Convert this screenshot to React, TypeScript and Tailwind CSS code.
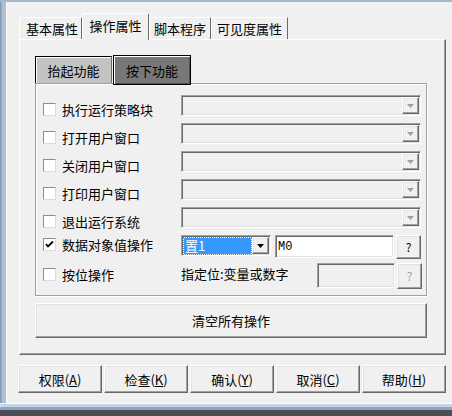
import React from "react";

const font = { fontFamily: '"Noto Sans CJK SC", "Noto Sans", sans-serif' };

const raised =
  "border border-t-white border-l-white border-b-[#696969] border-r-[#696969] shadow-[inset_-1px_-1px_0_#a0a0a0,inset_1px_1px_0_#e3e3e3] bg-[#f0f0f0]";
const sunken =
  "border border-t-[#a0a0a0] border-l-[#a0a0a0] border-b-white border-r-white shadow-[inset_1px_1px_0_#696969,inset_-1px_-1px_0_#e3e3e3]";

function Arrow({ color }: { color: string }) {
  return (
    <svg width="7" height="4" viewBox="0 0 7 4">
      <polygon points="0,0 7,0 3.5,4" fill={color} />
    </svg>
  );
}

function Check({ checked }: { checked?: boolean }) {
  return (
    <div className="w-[13px] h-[13px] shrink-0 bg-white border border-t-[#8e8f8f] border-l-[#8e8f8f] border-b-[#dcdcdc] border-r-[#dcdcdc] flex items-center justify-center">
      {checked && (
        <svg width="9" height="9" viewBox="0 0 9 9">
          <polyline points="1,4 3,6.5 8,1.5" fill="none" stroke="#000" strokeWidth="1.8" />
        </svg>
      )}
    </div>
  );
}

function DisabledCombo() {
  return (
    <div className={`w-[240px] h-[21px] ${sunken} bg-[#f0f0f0] flex justify-end items-center pr-[1px]`}>
      <div className={`w-[17px] h-[17px] ${raised} flex items-center justify-center`}>
        <Arrow color="#a0a0a0" />
      </div>
    </div>
  );
}

function Row({ label, top, children, checked }: { label: string; top: string; children: React.ReactNode; checked?: boolean }) {
  return (
    <div className="flex items-start h-[28px]">
      <div className={`w-[138px] flex items-center gap-[6px] h-[13px] ${top}`}>
        <Check checked={checked} />
        <span className="text-[13px] leading-[13px] text-black whitespace-nowrap">{label}</span>
      </div>
      {children}
    </div>
  );
}

function BottomBtn({ a, k }: { a: string; k: string }) {
  return (
    <div className={`w-[84px] h-[28px] ${raised} flex items-center justify-center text-[13px] leading-[13px] text-black`}>
      <span>
        {a}(<span className="underline">{k}</span>)
      </span>
    </div>
  );
}

export default function App() {
  return (
    <div className="w-[452px] h-[416px] bg-[#f0f0f0] flex flex-col overflow-hidden" style={font}>
      <div className="h-[2px] shrink-0 bg-[#a3b7cd]" />
      <div className="flex flex-1 min-h-0">
        <div className="w-[7px] shrink-0 bg-gradient-to-r from-[#7f93aa] via-[#b3c5d9] to-[#a9bcd2] border-r border-white" />
        <div className="flex-1 flex flex-col pl-[12px] pr-[6px] pt-[11px]">
          {/* tabs */}
          <div className="flex items-end h-[26px] text-[13px] leading-[13px] text-black">
            <div className="w-[63px] h-[22px] border-t border-l border-white border-r border-r-[#696969] rounded-tl-[2px] flex items-center justify-center pl-[3px]">
              基本属性
            </div>
            <div className="w-[67px] h-[27px] -mb-[1px] relative z-10 bg-[#f0f0f0] border-t border-l border-white border-r border-r-[#696969] rounded-t-[2px] flex justify-center pt-[5px]">
              操作属性
            </div>
            <div className="w-[62px] h-[22px] border-t border-l border-white border-r border-r-[#696969] flex items-center justify-center">
              脚本程序
            </div>
            <div className="w-[77px] h-[22px] border-t border-l border-white border-r border-r-[#696969] flex items-center justify-center">
              可见度属性
            </div>
          </div>
          {/* tab panel */}
          <div className="h-[316px] border border-t-white border-l-white border-r-[#696969] border-b-[#696969] shadow-[inset_-1px_-1px_0_#a0a0a0] pt-[15px] pl-[15px] flex flex-col">
            {/* sub tabs */}
            <div className="flex items-end h-[28px] text-[13px] leading-[13px] text-black">
              <div className="w-[77px] h-[27px] bg-[#c3c3c3] border-t border-l border-black border-r border-r-[#6a6a6a] shadow-[inset_1px_1px_0_#fff] flex items-center justify-center">
                抬起功能
              </div>
              <div className="ml-[1px] w-[78px] h-[30px] -mb-[2px] relative z-10 bg-[#787878] border border-black shadow-[inset_1px_1px_0_#fff,inset_-1px_-1px_0_#505050] flex items-center justify-center">
                按下功能
              </div>
            </div>
            {/* sub panel */}
            <div className="w-[392px] h-[213px] border border-[#a0a0a0] shadow-[1px_1px_0_#fff,inset_1px_1px_0_#fff] pt-[11px] pl-[7px] flex flex-col">
              <Row label="执行运行策略块" top="mt-[8px]"><DisabledCombo /></Row>
              <Row label="打开用户窗口" top="mt-[8px]"><DisabledCombo /></Row>
              <Row label="关闭用户窗口" top="mt-[8px]"><DisabledCombo /></Row>
              <Row label="打印用户窗口" top="mt-[8px]"><DisabledCombo /></Row>
              <Row label="退出运行系统" top="mt-[8px]"><DisabledCombo /></Row>
              <Row label="数据对象值操作" top="mt-[3px]" checked>
                <div className="flex items-start">
                  <div className={`w-[90px] h-[21px] ${sunken} bg-white flex items-center pl-[2px] pr-[1px]`}>
                    <div className="flex-1 h-[16px] bg-[#3399ff] outline outline-1 outline-dotted outline-[#d08000] text-white text-[13px] leading-[16px] pl-[1px] mr-[1px]">
                      置1
                    </div>
                    <div className={`w-[17px] h-[17px] ${raised} flex items-center justify-center`}>
                      <Arrow color="#000" />
                    </div>
                  </div>
                  <div className={`ml-[4px] w-[119px] h-[23px] ${sunken} bg-white pl-[2px] flex items-center text-[12px] leading-[12px] text-black`} style={{ fontFamily: '"Liberation Mono", monospace' }}>
                    M0
                  </div>
                  <div className={`ml-[2px] w-[25px] h-[24px] ${raised} flex items-center justify-center text-[12px] leading-[12px] text-black`}>
                    ?
                  </div>
                </div>
              </Row>
              <Row label="按位操作" top="mt-[5px]">
                <div className="flex items-start">
                  <div className="w-[136px] h-[20px] flex items-center text-[13px] leading-[13px] text-black whitespace-nowrap">
                    指定位:变量或数字
                  </div>
                  <div className={`w-[78px] h-[25px] ${sunken} bg-[#f0f0f0]`} />
                  <div className={`ml-[2px] w-[25px] h-[26px] ${raised} flex items-center justify-center text-[12px] leading-[12px] text-[#a0a0a0] [text-shadow:1px_1px_0_#fff]`}>
                    ?
                  </div>
                </div>
              </Row>
            </div>
            {/* clear button */}
            <div className={`mt-[7px] w-[392px] h-[35px] ${raised} flex items-center justify-center text-[13px] leading-[13px] text-black`}>
              清空所有操作
            </div>
          </div>
          {/* bottom buttons */}
          <div className="mt-[10px] -ml-[1px] flex gap-[2px]">
            <BottomBtn a="权限" k="A" />
            <BottomBtn a="检查" k="K" />
            <BottomBtn a="确认" k="Y" />
            <BottomBtn a="取消" k="C" />
            <BottomBtn a="帮助" k="H" />
          </div>
        </div>
      </div>
      <div className="h-[13px] shrink-0 flex flex-col">
        <div className="h-[1px] bg-white ml-[6px]" />
        <div className="h-[3px] bg-[#c4d5e8] rounded-bl-[4px]" />
        <div className="h-[3px] bg-[#8da6c2]" />
        <div className="flex-1 bg-[#4b4f55]" />
      </div>
    </div>
  );
}
